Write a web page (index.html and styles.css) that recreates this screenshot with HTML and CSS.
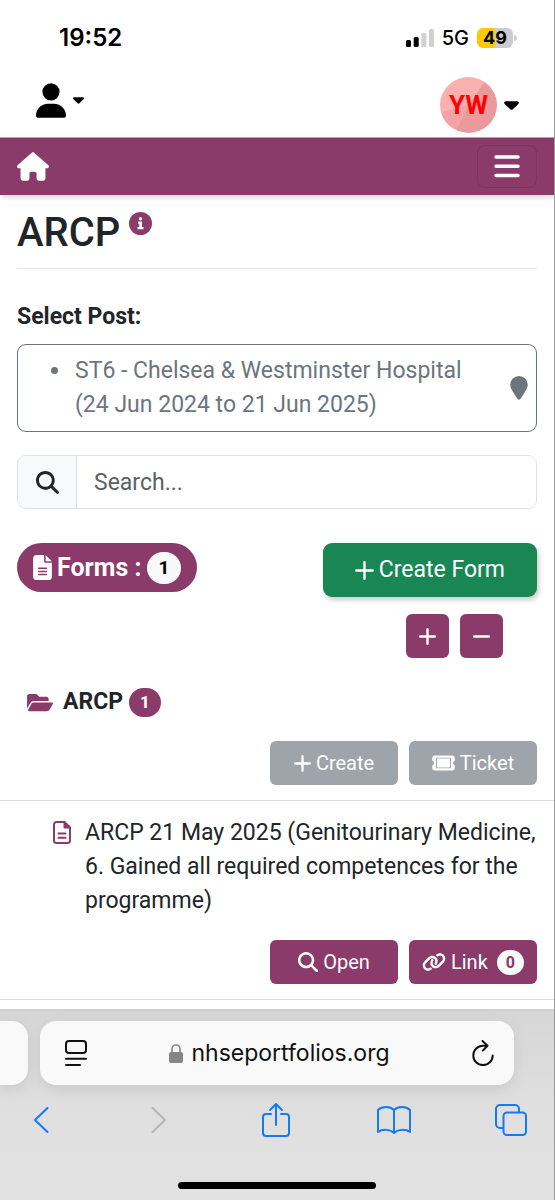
FILE: index.html
```html
<!DOCTYPE html>
<html lang="en">
<head>
<meta charset="utf-8">
<meta name="viewport" content="width=device-width, initial-scale=1">
<title>ARCP</title>
<link rel="stylesheet" href="styles.css">
</head>
<body>
<div class="status">
  <span class="time">19:52</span>
  <div class="signals">
    <svg width="28" height="18" viewBox="0 0 28 18"><rect x="0" y="11" width="5" height="7" rx="1.5"/><rect x="7.700" y="8" width="5" height="10" rx="1.500"/><g fill="#d0d0d0"><rect x="15.400" y="4" width="5" height="14" rx="1.500"/><rect x="23" y="0" width="5" height="18" rx="1.500"/></g></svg>
    <span class="network">5G</span>
    <div class="battery"><span class="level">49</span><svg width="3" height="6" viewBox="0 0 3 6"><path d="M0 0C4 0 4 6 0 6z" fill="#ccc"/></svg></div>
  </div>
</div>
<header class="account">
  <button class="plain user" aria-label="User menu">
    <svg width="30" height="35" viewBox="0 0 448 512"><path d="M224 256A128 128 0 1 0 224 0a128 128 0 1 0 0 256zm-45.700 48C79.800 304 0 383.800 0 482.300C0 498.700 13.300 512 29.700 512H418.300c16.400 0 29.700-13.300 29.700-29.700C448 383.800 368.200 304 269.700 304H178.300z"/></svg>
    <svg width="11" height="7" viewBox="0 0 12 7"><path d="M1.500 0h9c1.300 0 1.900 1.300 1 2.200L7 6.500c-.6.600-1.400.6-2 0L.5 2.200C-.4 1.300.2 0 1.500 0z"/></svg>
  </button>
  <button class="plain" aria-label="Profile menu">
    <span class="avatar">YW</span>
    <svg width="15" height="9" viewBox="0 0 12 7"><path d="M1.500 0h9c1.300 0 1.900 1.300 1 2.200L7 6.500c-.6.600-1.400.6-2 0L.5 2.200C-.4 1.300.2 0 1.500 0z"/></svg>
  </button>
</header>
<nav class="navbar">
  <a href="#" aria-label="Home"><svg width="32" height="29" viewBox="0 0 576 512" fill="#fff"><path d="M575.800 255.500c0 18-15 32.100-32 32.100h-32l.7 160.200c0 2.700-.2 5.400-.5 8.100V472c0 22.100-17.900 40-40 40H392c-22.100 0-40-17.900-40-40V384c0-17.700-14.300-32-32-32H256c-17.700 0-32 14.300-32 32v88c0 22.100-17.900 40-40 40H104c-22.100 0-40-17.900-40-40V287.600H32c-18 0-32-14-32-32.100c0-9 3-17 10-24L266.400 8c7-7 15-8 22-8s15 2 21 7L564.800 231.500c8 7 12 15 11 24z"/></svg></a>
  <button class="toggler" aria-label="Toggle navigation"><svg width="26" height="23" viewBox="0 0 26 23" stroke="#fff" stroke-width="3.500" stroke-linecap="round"><path d="M2 2h22M2 11.200h22M2 20.400h22"/></svg></button>
</nav>
<main>
  <div class="heading">
    <h1>ARCP</h1>
    <svg width="23" height="23" viewBox="0 0 23 23"><circle cx="11.500" cy="11.500" r="11.500" fill="#8a3b69"/><g fill="#fff"><circle cx="11.500" cy="6.800" r="1.700"/><path d="M9 9.500h4v5.500h1.500v2.200h-6V15h1.700v-3.300H9z"/></g></svg>
  </div>
  <p class="label" id="post-label">Select Post:</p>
  <button class="post" aria-labelledby="post-label post-name">
    <span class="dot"></span>
    <span class="post-name" id="post-name">ST6 - Chelsea &amp; Westminster Hospital (24 Jun 2024 to 21 Jun 2025)</span>
    <svg width="18" height="24" viewBox="0 0 18 24" fill="#6c757d"><path d="M9 0a8.800 8.800 0 0 1 8.800 8.800c0 4-5 10.500-7.500 14.200-.7 1-1.900 1-2.600 0C5.200 19.300.2 12.800.2 8.800A8.800 8.800 0 0 1 9 0z"/></svg>
  </button>
  <div class="search">
    <label for="search" aria-label="Search"><svg width="23" height="23" viewBox="0 0 512 512" fill="#212529"><path d="M416 208c0 45.900-14.900 88.300-40 122.700L502.600 457.400c12.500 12.500 12.500 32.800 0 45.300s-32.800 12.500-45.300 0L330.700 376c-34.400 25.200-76.800 40-122.700 40C93.100 416 0 322.900 0 208S93.100 0 208 0S416 93.100 416 208zM208 352a144 144 0 1 0 0-288 144 144 0 1 0 0 288z"/></svg></label>
    <input id="search" type="text" placeholder="Search...">
  </div>
  <div class="forms">
    <div class="forms-badge">
      <svg width="19" height="25" viewBox="0 0 384 512" fill="#fff" fill-rule="evenodd"><path d="M64 0C28.700 0 0 28.700 0 64V448c0 35.300 28.700 64 64 64H320c35.300 0 64-28.700 64-64V160H256c-17.700 0-32-14.300-32-32V0H64zM256 0V128H384L256 0zM112 256H272c8.800 0 16 7.200 16 16s-7.200 16-16 16H112c-8.800 0-16-7.200-16-16s7.200-16 16-16zm0 64H272c8.800 0 16 7.200 16 16s-7.200 16-16 16H112c-8.800 0-16-7.200-16-16s7.200-16 16-16zm0 64H272c8.800 0 16 7.200 16 16s-7.200 16-16 16H112c-8.800 0-16-7.200-16-16s7.200-16 16-16z"/></svg>
      <span>Forms :</span><span class="pill light">1</span>
    </div>
    <button class="btn create-form"><svg width="19" height="19" viewBox="0 0 19 19" stroke="#fff" stroke-width="2.400" stroke-linecap="round"><path d="M9.500 1.300v16.400M1.300 9.500h16.400"/></svg>Create Form</button>
  </div>
  <div class="expanders">
    <button class="btn square" aria-label="Expand all"><svg width="17" height="17" viewBox="0 0 19 19" stroke="#fff" stroke-width="2.700" stroke-linecap="round"><path d="M9.500 1.300v16.400M1.300 9.500h16.400"/></svg></button>
    <button class="btn square" aria-label="Collapse all"><svg width="17" height="17" viewBox="0 0 19 19" stroke="#fff" stroke-width="2.700" stroke-linecap="round"><path d="M1.300 9.500h16.400"/></svg></button>
  </div>
  <div class="folder">
    <svg width="26" height="23" viewBox="0 0 576 512" fill="#8a3b69"><path d="M572.700 292.100L500.300 416.200A64 64 0 0 1 445 448H45c-18.500 0-30-20.100-20.700-36.100l72.400-124.100A64 64 0 0 1 152 256h400c18.500 0 30 20.100 20.700 36.100zM152 224h328v-48c0-26.500-21.500-48-48-48H272l-64-64H48C21.500 64 0 85.500 0 112v278l69.100-118.400C86.200 242.300 118 224 152 224z"/></svg>
    <h2>ARCP</h2><span class="pill">1</span>
  </div>
  <div class="actions">
    <button class="btn muted" disabled><svg width="17" height="17" viewBox="0 0 19 19" stroke="#fff" stroke-width="2.600" stroke-linecap="round"><path d="M9.500 1.300v16.400M1.300 9.500h16.400"/></svg>Create</button>
    <button class="btn muted" disabled><svg width="23" height="20" viewBox="0 0 576 512" fill="#fff" fill-rule="evenodd"><path d="M64 64C28.700 64 0 92.700 0 128v64c0 8.800 7.400 15.700 15.700 18.600C34.500 217.100 48 235 48 256s-13.500 38.900-32.300 45.400C7.400 304.300 0 311.200 0 320v64c0 35.300 28.700 64 64 64H512c35.300 0 64-28.700 64-64V320c0-8.800-7.400-15.700-15.700-18.600C541.500 294.900 528 277 528 256s13.500-38.900 32.300-45.400c8.300-2.900 15.700-9.800 15.700-18.600V128c0-35.300-28.700-64-64-64H64zM120 120H456c15 0 26 11 26 26V366c0 15-11 26-26 26H120c-15 0-26-11-26-26V146c0-15 11-26 26-26zM130 142H446c5 0 10 5 10 10V360c0 5-5 10-10 10H130c-5 0-10-5-10-10V152c0-5 5-10 10-10z"/></svg>Ticket</button>
  </div>
  <section class="entry">
    <div class="entry-title">
      <svg width="18" height="23" viewBox="0 0 18 23" fill="none" stroke="#8a3b69" stroke-width="2"><path d="M3.500 1h8L17 6.500v13a2.500 2.500 0 0 1-2.500 2.500h-11A2.500 2.500 0 0 1 1 19.500v-16A2.500 2.500 0 0 1 3.500 1z"/><path d="M11 1v6h6z" fill="#8a3b69" stroke-width="1"/><path d="M5.500 12.500h7M5.500 16.800h7" stroke-linecap="round"/></svg>
      <p>ARCP 21 May 2025 (Genitourinary Medicine, 6. Gained all required competences for the programme)</p>
    </div>
    <div class="actions">
      <button class="btn"><svg width="20" height="20" viewBox="0 0 512 512" fill="#fff"><path d="M416 208c0 45.900-14.900 88.300-40 122.700L502.600 457.400c12.500 12.500 12.500 32.800 0 45.300s-32.800 12.500-45.300 0L330.700 376c-34.400 25.200-76.800 40-122.700 40C93.100 416 0 322.900 0 208S93.100 0 208 0S416 93.100 416 208zM208 352a144 144 0 1 0 0-288 144 144 0 1 0 0 288z"/></svg>Open</button>
      <button class="btn"><svg width="24" height="20" viewBox="0 0 640 512" fill="#fff"><path d="M579.800 267.700c56.500-56.500 56.500-148 0-204.500c-50-50-128.800-56.500-186.300-15.400l-1.600 1.100c-14.400 10.300-17.700 30.300-7.400 44.600s30.300 17.700 44.600 7.400l1.600-1.100c32.100-22.900 76-19.300 103.800 8.600c31.500 31.500 31.500 82.500 0 114L422.300 334.800c-31.500 31.500-82.500 31.500-114 0c-27.900-27.900-31.500-71.800-8.600-103.800l1.100-1.600c10.300-14.400 6.900-34.400-7.400-44.600s-34.400-6.900-44.600 7.400l-1.100 1.600C206.500 251.200 213 330 263 380c56.500 56.500 148 56.500 204.500 0L579.800 267.700zM60.200 244.300c-56.500 56.500-56.500 148 0 204.500c50 50 128.800 56.500 186.300 15.400l1.600-1.100c14.400-10.300 17.700-30.300 7.400-44.600s-30.300-17.700-44.600-7.400l-1.600 1.100c-32.100 22.900-76 19.300-103.800-8.600C74 372 74 321 105.500 289.500L217.700 177.200c31.500-31.500 82.500-31.500 114 0c27.900 27.900 31.500 71.800 8.600 103.900l-1.100 1.600c-10.300 14.400-6.900 34.400 7.400 44.600s34.400 6.900 44.600-7.400l1.100-1.600C433.500 260.800 427 182 377 132c-56.500-56.500-148-56.500-204.500 0L60.200 244.300z"/></svg>Link<span class="pill small">0</span></button>
    </div>
  </section>
</main>
<footer class="browser">
  <div class="tabs">
    <div class="tab-edge"></div>
    <div class="address">
      <button class="plain" aria-label="Page menu"><svg width="22" height="26" viewBox="0 0 22 26" fill="none" stroke="#111" stroke-width="2" stroke-linecap="round"><rect x="1" y="1" width="20" height="12" rx="3"/><path d="M1 18.800h20M1 25h14"/></svg></button>
      <span class="url"><svg width="14" height="19" viewBox="0 0 14 19"><path d="M3 9V5a4 4 0 0 1 8 0v4" fill="none" stroke="#85858a" stroke-width="1.600"/><rect y="8" width="14" height="11" rx="2.200" fill="#85858a"/></svg>nhseportfolios.org</span>
      <button class="plain" aria-label="Reload"><svg width="22" height="26" viewBox="0 0 22 26" fill="none" stroke="#111" stroke-width="2" stroke-linecap="round" stroke-linejoin="round"><path d="M14.500 5.700H11A9.700 9.700 0 1 0 20.700 15.400M10.500 1l5 4.700-4.700 4.900"/></svg></button>
    </div>
  </div>
  <div class="toolbar">
    <button class="plain" aria-label="Back"><svg width="16" height="26" viewBox="0 0 16 26"><path d="M14.500 1L2 13l12.500 12"/></svg></button>
    <button class="plain off" aria-label="Forward" disabled><svg width="16" height="26" viewBox="0 0 16 26"><path d="M1.500 1L14 13 1.500 25"/></svg></button>
    <button class="plain" aria-label="Share"><svg width="28" height="34" viewBox="0 0 28 34"><path d="M9 11H4a3 3 0 0 0-3 3v16a3 3 0 0 0 3 3h20a3 3 0 0 0 3-3V14a3 3 0 0 0-3-3h-5M14 22V1M8 7l6-6 6 6"/></svg></button>
    <button class="plain" aria-label="Bookmarks"><svg width="34" height="28" viewBox="0 0 34 28"><path d="M17 4C13 0 5 0 1 4v22c4-3 12-3 16 1 4-4 12-4 16-1V4c-4-4-12-4-16 0zv23"/></svg></button>
    <button class="plain" aria-label="Tabs"><svg width="32" height="32" viewBox="0 0 32 32"><path d="M8 24H5a4 4 0 0 1-4-4V5a4 4 0 0 1 4-4h15a4 4 0 0 1 4 4v3"/><rect x="8.500" y="8.500" width="22.500" height="22.500" rx="3.500"/></svg></button>
  </div>
  <div class="home-bar"></div>
</footer>
</body>
</html>
```
FILE: styles.css
```css
* { box-sizing: border-box; }
body {
  margin: 0;
  min-height: 100vh;
  display: flex;
  flex-direction: column;
  background: #fff;
  border-right: 1px solid #999;
  color: #212529;
  font-family: Roboto, "Liberation Sans", sans-serif;
  font-size: 23px;
  line-height: 34px;
}
svg { display: block; flex: none; }
h1, h2, p { margin: 0; }
button, input { font: inherit; color: inherit; }
.plain { display: flex; align-items: center; border: 0; padding: 0; background: none; }

.status {
  display: flex;
  justify-content: space-between;
  align-items: center;
  height: 75px;
  padding: 0 37px 0 59px;
  color: #000;
  font-family: Inter, sans-serif;
}
.time { font-size: 24px; font-weight: 600; }
.signals { display: flex; align-items: center; gap: 8px; }
.network { font-size: 20px; font-weight: 500; }
.battery { display: flex; align-items: center; gap: 1px; }
.level {
  width: 36px;
  border-radius: 6px;
  background: linear-gradient(90deg, #fdc70c 50%, #ccc 50%);
  font-size: 18px;
  font-weight: 700;
  line-height: 20px;
  text-align: center;
}

.account {
  display: flex;
  justify-content: space-between;
  height: 62px;
  padding: 2px 35px 4px 36px;
}
.account .plain { gap: 7px; }
.account .user { align-self: flex-start; padding-top: 6px; }
.avatar {
  width: 57px;
  border-radius: 50%;
  background: conic-gradient(from 35deg, #e99a9c 0 170deg, #f3a3a4 170deg 220deg, #fbb0b0 220deg);
  color: #f00;
  font-size: 26px;
  font-weight: 700;
  line-height: 56px;
  text-align: center;
}

.navbar {
  display: flex;
  align-items: center;
  justify-content: space-between;
  height: 58px;
  padding: 0 17px;
  border-top: 1px solid #b9a0b0;
  background: #8a3b69;
  box-shadow: 2px 3px 4px #ddd;
}
.toggler {
  padding: 9px 16px;
  border: 1px solid #7b3460;
  border-radius: 8px;
  background: none;
}

main { display: flex; flex-direction: column; padding: 14px 17px 0; }
.heading {
  display: flex;
  align-items: flex-start;
  gap: 9px;
  height: 60px;
  border-bottom: 1px solid #e6e6e8;
}
.heading svg { margin-top: 3px; }
h1 { font-size: 40px; font-weight: 500; line-height: 48px; }
.label { margin-top: 31px; font-weight: 700; }
.post {
  display: flex;
  align-items: center;
  margin-top: 10px;
  padding: 9px 8px 9px 33px;
  border: 1px solid #6c757d;
  border-radius: 9px;
  background: #fff;
  color: #6c757d;
  text-align: left;
}
.dot { align-self: flex-start; width: 7px; height: 7px; margin: 13px 17px 0 0; border-radius: 50%; background: #6c757d; }
.post-name { flex: 1; padding-right: 40px; }
.search {
  display: flex;
  margin-top: 23px;
  border: 1px solid #dee2e6;
  border-radius: 9px;
  overflow: hidden;
}
.search label { display: flex; align-items: center; padding: 0 17px 0 18px; border-right: 1px solid #dee2e6; background: #f8f9fa; }
.search input { flex: 1; min-width: 0; padding: 10px 17px 8px; border: 0; background: #fff; }
.search input::placeholder { color: #5c6166; opacity: 1; }

.forms { display: flex; justify-content: space-between; align-items: flex-start; margin-top: 34px; }
.forms-badge {
  display: flex;
  align-items: center;
  gap: 5px;
  height: 49px;
  padding: 0 16px;
  border-radius: 25px;
  background: #8a3b69;
  color: #fff;
  font-size: 25px;
  font-weight: 700;
}
.pill {
  padding: 0 11px;
  border-radius: 15px;
  background: #8a3b69;
  color: #fff;
  font-size: 17px;
  font-weight: 700;
  line-height: 29px;
}
.pill.light { padding: 0 12px; border-radius: 16px; background: #f8f9fa; color: #000; font-size: 19px; line-height: 32px; }
.pill.small { margin-left: 4px; padding: 0 9px; background: #f8f9fa; color: #8a3b69; font-size: 16px; line-height: 25px; }
.btn {
  display: flex;
  align-items: center;
  justify-content: center;
  gap: 5px;
  min-width: 128px;
  height: 44px;
  padding: 0;
  border: 0;
  border-radius: 6px;
  background: #8a3b69;
  color: #fff;
  font-size: 20px;
}
.create-form {
  height: 54px;
  padding: 0 32px;
  border-radius: 9px;
  background: #198754;
  box-shadow: 2px 3px 5px #ccc;
  font-size: 23px;
}
.expanders { display: flex; justify-content: flex-end; gap: 11px; margin: 17px 34px 0 0; }
.square { min-width: 43px; }
.folder { display: flex; align-items: center; gap: 6px; margin: 27px 0 0 10px; }
h2 { margin-left: 4px; font-size: 23px; font-weight: 700; line-height: 34px; }
.actions { display: flex; justify-content: flex-end; gap: 11px; }
.folder + .actions { margin-top: 22px; }
.muted { background: #9fa4aa; }
.entry {
  margin: 15px -17px 0;
  padding: 15px 17px;
  border: solid #dedede;
  border-width: 1px 0;
}
.entry-title { display: flex; align-items: flex-start; gap: 14px; padding-left: 36px; }
.entry-title svg { margin-top: 5px; }
.entry .actions { margin-top: 22px; }

.browser {
  display: flex;
  flex-direction: column;
  margin-top: auto;
  border-top: 2px solid #cfcfcf;
  background: linear-gradient(#d6d6d6, #dfdfdf 50%, #e2e2e2);
}
.tabs { display: flex; gap: 12px; padding: 10px 40px 0 0; }
.tab-edge { width: 28px; border-radius: 0 16px 16px 0; background: #f9f9f9; box-shadow: 0 4px 14px #c8c8c8; }
.address {
  flex: 1;
  display: flex;
  align-items: center;
  justify-content: space-between;
  height: 64px;
  padding: 0 20px 0 25px;
  border-radius: 16px;
  background: #f9f9f9;
  box-shadow: 0 4px 14px #c8c8c8;
}
.url { display: flex; align-items: center; gap: 8px; color: #111; font-family: Inter, sans-serif; font-size: 23px; }
.toolbar { display: flex; align-items: center; justify-content: space-between; height: 70px; padding: 0 26px 0 24px; }
.toolbar .plain { justify-content: center; width: 34px; }
.toolbar svg { fill: none; stroke: #147af3; stroke-width: 2; stroke-linecap: round; stroke-linejoin: round; }
.toolbar .off svg { stroke: #b5b5b5; }
.home-bar { align-self: center; width: 198px; height: 7px; margin: 27px 0 11px; border-radius: 4px; background: #000; }
```
